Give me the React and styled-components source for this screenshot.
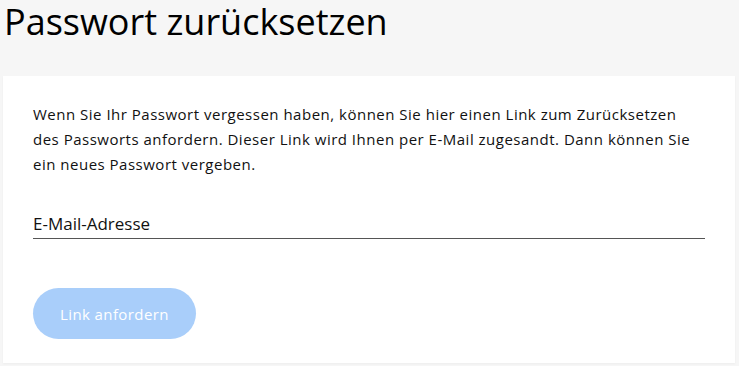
import React from 'react';
import styled, { createGlobalStyle } from 'styled-components';

const GlobalStyle = createGlobalStyle`
    html, body {
        margin: 0;
        padding: 0;
        background-color: #f6f6f6;
        font-family: 'Open Sans', 'Noto Sans', sans-serif;
    }
`;

const Page = styled.div`
    width: 739px;
    height: 366px;
    padding: 0 4px 3px 3px;
    box-sizing: border-box;
    display: flex;
    flex-direction: column;
`;

const Title = styled.h1`
    margin: 0;
    padding: 0 0 0 1px;
    height: 76px;
    font-size: 36px;
    font-weight: 400;
    line-height: 50px;
    color: #000;
    transform: translateY(-3px);
`;

const Card = styled.section`
    flex: 1;
    background-color: #fff;
    padding: 26px 30px 0 30px;
    box-sizing: border-box;
    box-shadow: 0 1px 2px rgba(0, 0, 0, 0.04);
`;

const Intro = styled.p`
    margin: 0;
    font-size: 15px;
    line-height: 25px;
    letter-spacing: 0.5px;
    color: #111;
    white-space: nowrap;
`;

const Field = styled.label`
    display: block;
    margin-top: 35px;
    border-bottom: 1px solid #555;
    padding-bottom: 2px;
    font-size: 17px;
    line-height: 24px;
    color: #111;
`;

const Button = styled.button`
    margin-top: 49px;
    height: 51px;
    padding: 0 27px;
    border: none;
    border-radius: 26px;
    background-color: #a9cefa;
    color: #fff;
    font-family: inherit;
    font-size: 15px;
    letter-spacing: 0.4px;
`;

const App = () => {
    return (
        <>
            <GlobalStyle />
            <Page>
                <Title>Passwort zurücksetzen</Title>
                <Card>
                    <Intro>
                        Wenn Sie Ihr Passwort vergessen haben, können Sie hier einen Link zum Zurücksetzen
                        <br />
                        des Passworts anfordern. Dieser Link wird Ihnen per E-Mail zugesandt. Dann können Sie
                        <br />
                        ein neues Passwort vergeben.
                    </Intro>
                    <Field>E-Mail-Adresse</Field>
                    <Button>Link anfordern</Button>
                </Card>
            </Page>
        </>
    );
};

export default App;
